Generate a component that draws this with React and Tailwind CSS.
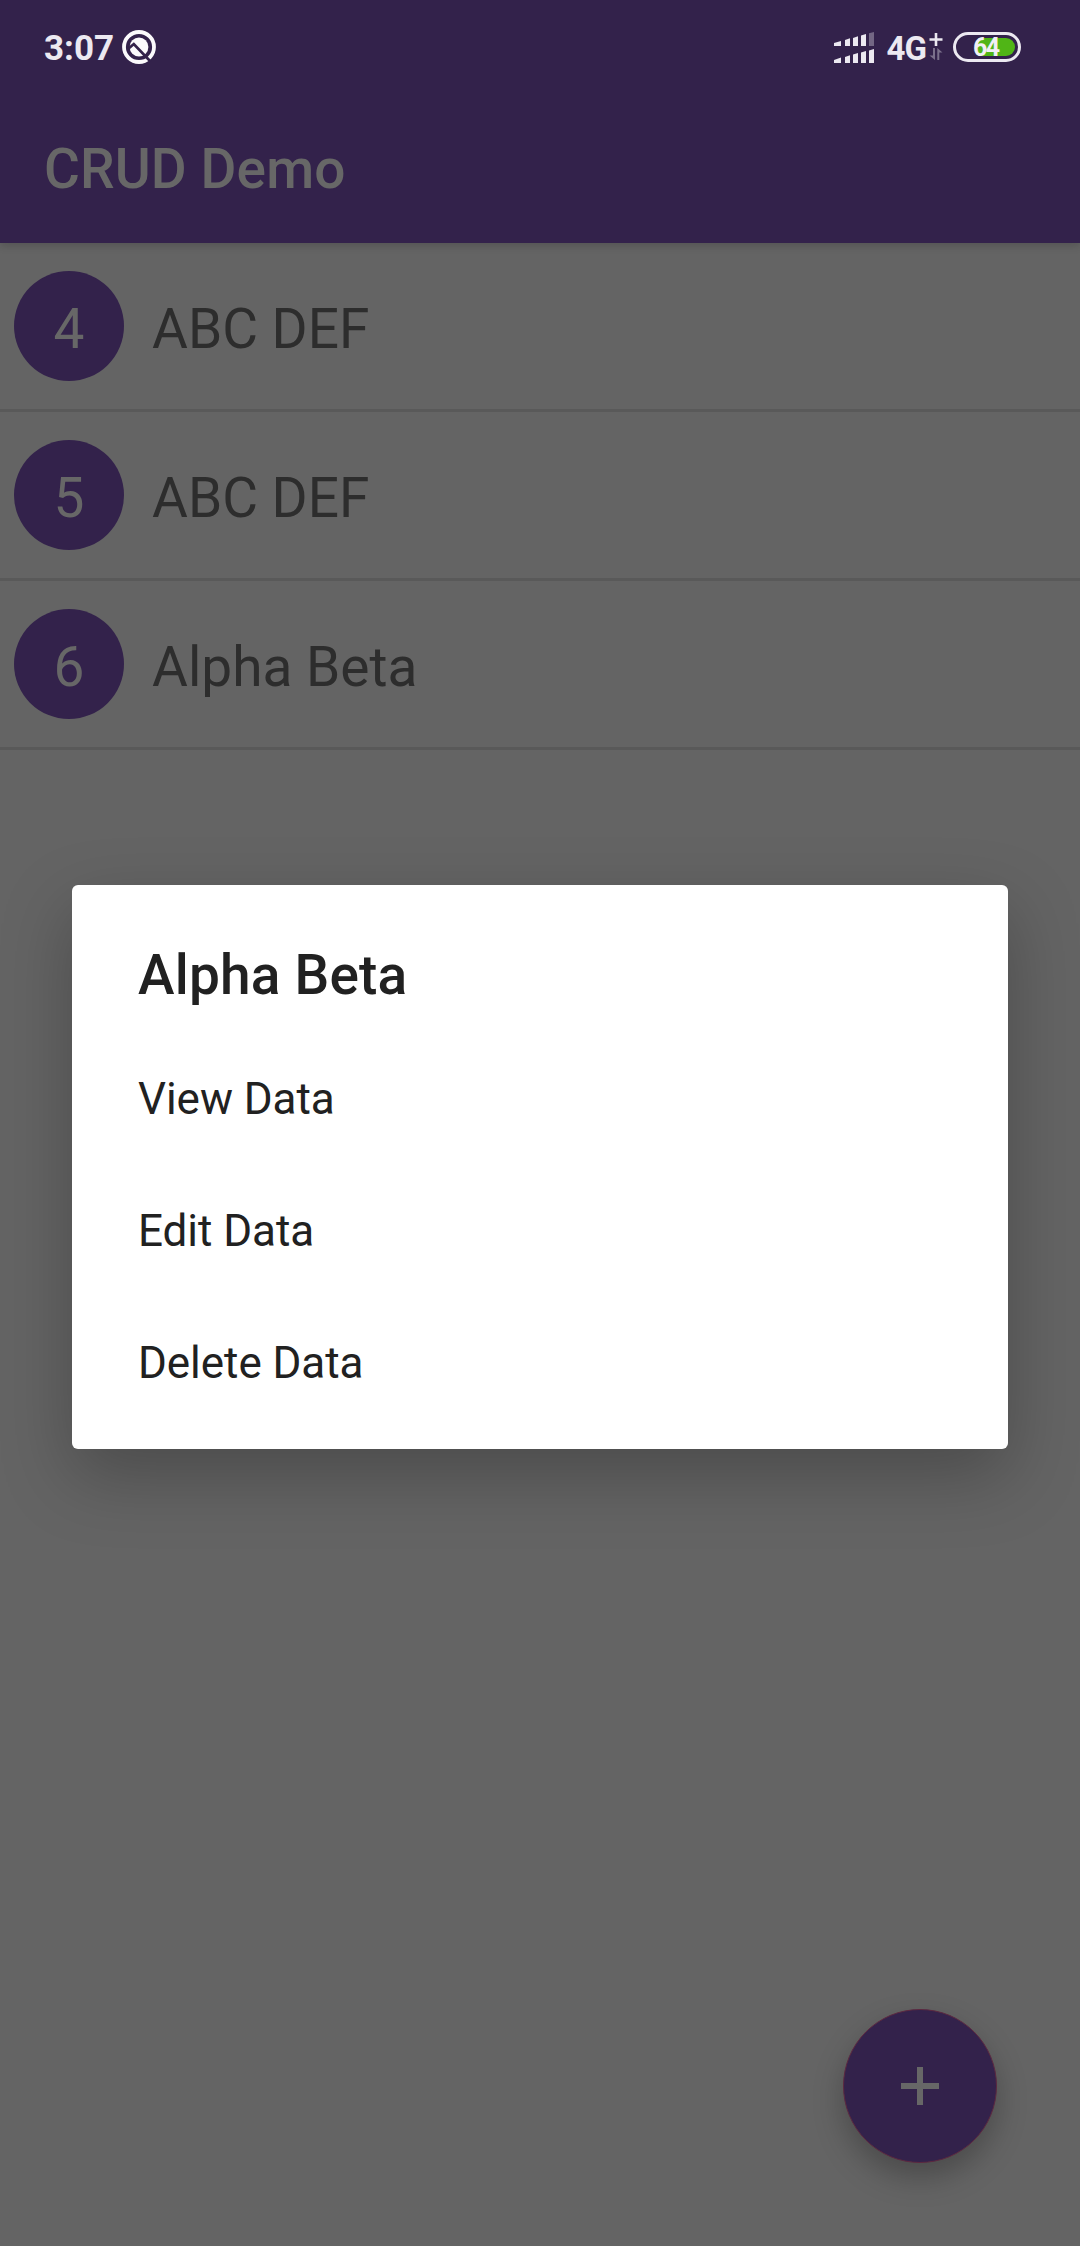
const rows = [
  { id: 4, name: "ABC DEF" },
  { id: 5, name: "ABC DEF" },
  { id: 6, name: "Alpha Beta" },
];

const actions = ["View Data", "Edit Data", "Delete Data"];

function AssistIcon() {
  return (
    <svg className="ml-[7px] h-[36px] w-[36px]" viewBox="0 0 36 36" fill="none">
      <circle cx="18" cy="18" r="15" stroke="#fbfafc" strokeWidth="3.8" />
      <circle cx="18" cy="18" r="9.4" fill="#fbfafc" />
      <path d="M7 20L12.8 15L29.5 32.5" stroke="#33224b" strokeWidth="2.7" />
    </svg>
  );
}

function SignalIcon() {
  return (
    <svg className="h-[32px] w-[41px]" viewBox="0 0 41 32" fill="#ece9f1">
      <path d="M1 11L8 9V14H1Z M12 8L17 6.3V14H12Z M20 6L25 4.3V14H20Z M28 3.5L33 2V14H28Z" />
      <path d="M36 1.2L41 0V14H36Z" opacity=".35" />
      <path d="M1 28L8 25.5V31H1Z M12 25L17 23.3V31H12Z M20 22.5L25 21V31H20Z M28 20.5L33 19V31H28Z M36 18.5L41 17V31H36Z" />
    </svg>
  );
}

function DataIcon() {
  return (
    <svg className="ml-[3px] h-[28px] w-[14px]" viewBox="0 0 14 28">
      <path d="M7 1V14M.5 7.5H13.5" stroke="#ece9f1" strokeWidth="2.6" />
      <path d="M4 16H6V28L.5 23.5H4Z M8.3 28V16L13.5 20.5H10.3V28Z" fill="#7b708b" />
    </svg>
  );
}

function Battery() {
  return (
    <div className="ml-[10px] flex h-[30px] w-[68px] justify-end rounded-full border-3 border-[#ece9f1] p-[3px]">
      <div className="h-[18px] w-[37px] rounded-r-full bg-[#50b516]">
        <div className="-ml-[5px] flex h-[18px] w-[30px] items-center pt-[2px] text-[25px] leading-[30px] font-bold tracking-[-1.5px] text-[#f1eff5]">64</div>
      </div>
    </div>
  );
}

export default function App() {
  return (
    <div className="relative flex h-[2246px] w-[1080px] flex-col overflow-hidden bg-[#646464] font-['Roboto',sans-serif]">
      <header className="h-[243px] shrink-0 bg-[#33224b] shadow-[0_3px_8px_rgba(0,0,0,0.16)]">
        <div className="flex h-[89px] items-start justify-between pl-[44px] pr-[59px]">
          <div className="flex pt-[29px]">
            <span className="pt-px text-[35px] leading-[38px] font-bold text-[#ece9f1]">3:07</span>
            <AssistIcon />
          </div>
          <div className="flex pt-[32px]">
            <SignalIcon />
            <span className="ml-[13px] pt-px text-[33px] leading-[31px] font-bold tracking-[-1px] text-[#ece9f1]">4G</span>
            <DataIcon />
            <Battery />
          </div>
        </div>
        <h1 className="flex h-[154px] items-center pl-[44px] pt-[6px] text-[55px] font-medium tracking-[0.1px] text-[#676767]">CRUD Demo</h1>
      </header>

      <ul>
        {rows.map((row) => (
          <li key={row.id} className="flex h-[169px] items-center border-b-3 border-[#595959] pl-[14px]">
            <div className="flex h-[110px] w-[110px] items-center justify-center rounded-full bg-[#33224b] pt-[6px] text-[55px] text-[#676767]">
              {row.id}
            </div>
            <span className="pl-[28px] pt-[6px] text-[55px] text-[#2d2d2d]">{row.name}</span>
          </li>
        ))}
      </ul>

      <button className="absolute left-[843px] top-[2009px] flex h-[154px] w-[154px] items-center justify-center rounded-full border border-[#5c2840] bg-[#33224b] shadow-[0_14px_30px_rgba(0,0,0,0.26)]">
        <svg className="h-[38px] w-[38px]" viewBox="0 0 38 38">
          <path d="M19 0V38M0 19H38" stroke="#676767" strokeWidth="6" />
        </svg>
      </button>

      <section className="absolute left-[72px] top-[885px] h-[564px] w-[936px] rounded-[6px] bg-white px-[66px] text-[#212121] shadow-[0_26px_70px_rgba(0,0,0,0.25)]">
        <h2 className="flex h-[148px] items-center pt-[32px] text-[55px] font-medium tracking-[0.2px]">Alpha Beta</h2>
        {actions.map((action) => (
          <div key={action} className="flex h-[132px] items-center text-[44px] tracking-[-0.05px]">
            {action}
          </div>
        ))}
      </section>
    </div>
  );
}
